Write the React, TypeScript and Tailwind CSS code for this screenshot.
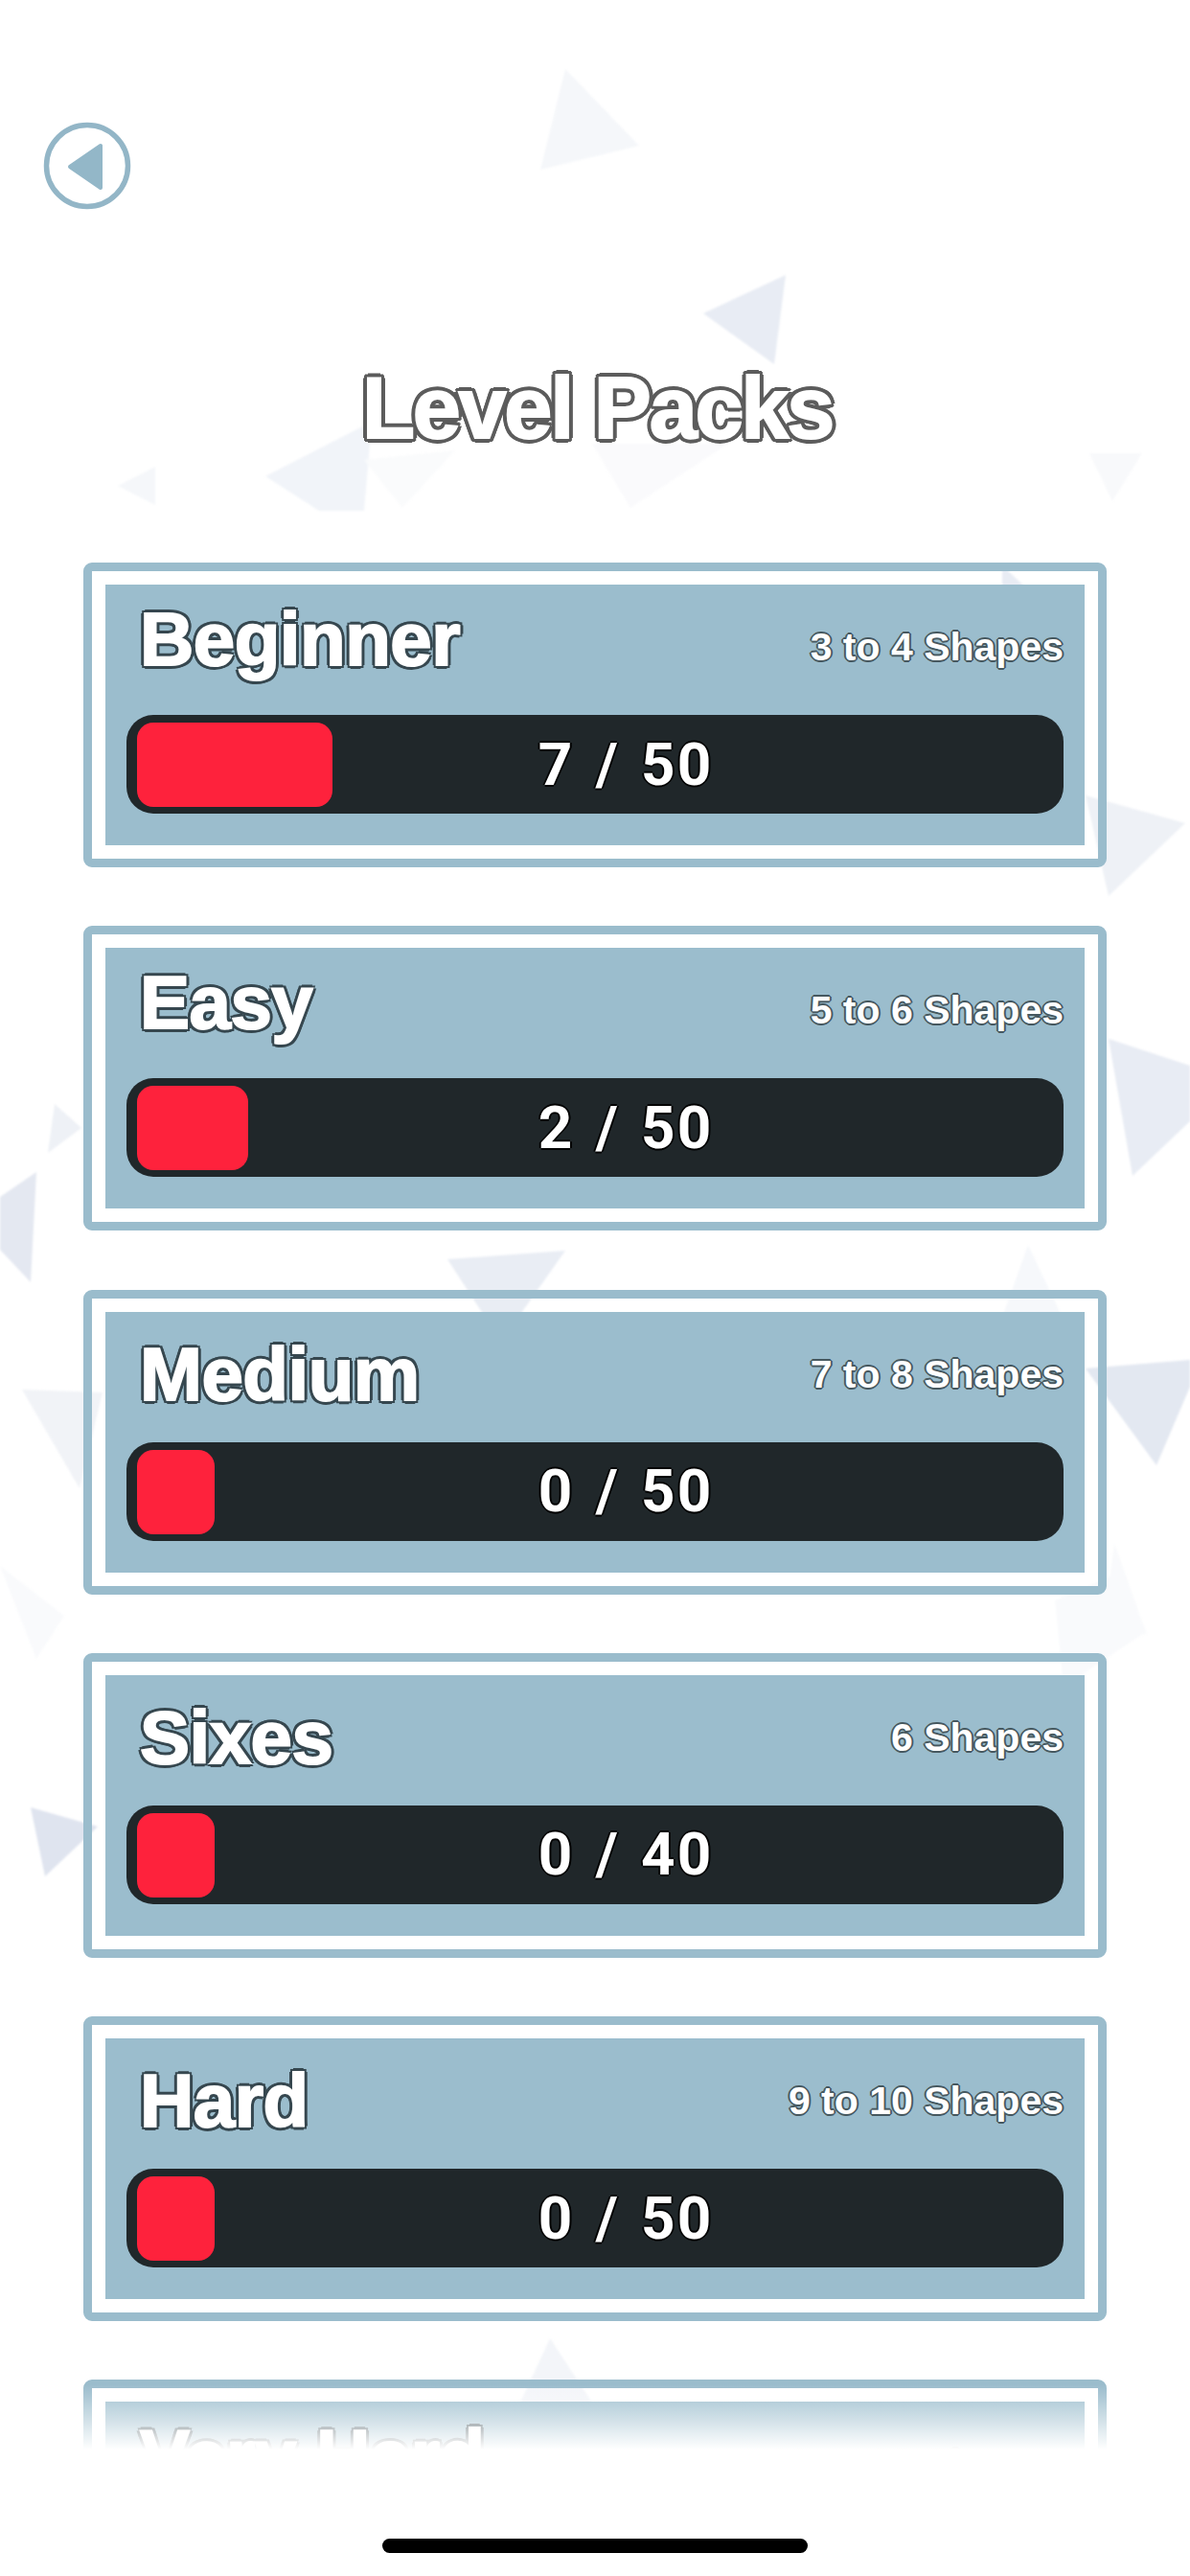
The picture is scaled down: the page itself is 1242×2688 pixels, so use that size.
import React from "react";

const titleFont = "font-['Liberation_Sans',Arial,sans-serif]";

const packs = [
  { name: "Beginner", shapes: "3 to 4 Shapes", score: "7 / 50", fill: 204, low: false },
  { name: "Easy", shapes: "5 to 6 Shapes", score: "2 / 50", fill: 116, low: false },
  { name: "Medium", shapes: "7 to 8 Shapes", score: "0 / 50", fill: 81, low: true },
  { name: "Sixes", shapes: "6 Shapes", score: "0 / 40", fill: 81, low: true },
  { name: "Hard", shapes: "9 to 10 Shapes", score: "0 / 50", fill: 81, low: true },
  { name: "Very Hard", shapes: "11 to 12 Shapes", score: "", fill: 81, low: false },
];

const triangles: [string, string][] = [
  ["590,72 667,152 564,177", "#f5f7fa"],
  ["820,287 734,327 808,380", "#e8ecf4"],
  ["388,440 277,497 333,533 380,533", "#f1f4f9"],
  ["162,487 123,507 162,527", "#f5f7fa"],
  ["475,470 420,530 380,480", "#fafbfc"],
  ["618,463 658,530 760,463", "#fafafc"],
  ["1137,473 1192,473 1161,523", "#f8f9fb"],
  ["1046,590 1110,650 1046,650", "#e8ecf4"],
  ["1133,830 1237,859 1157,935", "#eef1f6"],
  ["1157,1084 1242,1112 1242,1170 1182,1227", "#e8ecf4"],
  ["1133,1428 1242,1419 1242,1447 1207,1529", "#e3e8f1"],
  ["1163,1610 1197,1706 1153,1687", "#f9fafc"],
  ["57,1152 85,1177 50,1203", "#eef1f6"],
  ["38,1223 32,1338 0,1304 0,1249", "#e4e8f1"],
  ["23,1450 107,1453 83,1553", "#f1f3f7"],
  ["467,1314 590,1305 523,1400", "#e9edf4"],
  ["32,1886 102,1906 47,1958", "#dfe4ef"],
  ["0,1634 67,1686 38,1731", "#f9fafc"],
  ["1073,1299 1130,1420 1030,1420", "#f6f8fb"],
  ["1101,1670 1170,1640 1196,1703 1110,1760", "#f9fafc"],
  ["574,2440 543,2507 618,2507", "#f3f5f9"],
];

function Background() {
  return (
    <svg className="absolute inset-0 blur-[1px]" width="1242" height="2688" viewBox="0 0 1242 2688">
      {triangles.map(([points, fill], i) => (
        <polygon key={i} points={points} fill={fill} />
      ))}
    </svg>
  );
}

function BackButton() {
  return (
    <svg width="92" height="92" viewBox="0 0 92 92">
      <circle cx="46" cy="46" r="42.5" fill="none" stroke="#93b6c7" strokeWidth="5.5" />
      <path
        d="M28 47 L60 25 L60 69 Z"
        fill="#93b7c8"
        stroke="#93b7c8"
        strokeWidth="4"
        strokeLinejoin="round"
      />
    </svg>
  );
}

function PackCard({ name, shapes, score, fill, low }: (typeof packs)[number]) {
  return (
    <div className="h-[318px] shrink-0 rounded-[9px] border-[9px] border-[#9abccc] p-[14px]">
      <div className="h-full bg-[#9bbdcd] px-[22px]">
        <div className="flex h-[136px] items-start justify-between">
          <span
            className={`${titleFont} ${low ? "mt-[19px]" : "mt-[11px]"} ml-[14px] text-[78px] font-bold leading-[92px] tracking-[-0.5px] text-white [-webkit-text-stroke:2px_#fff] [text-shadow:4px_0_#36474f,3px_3px_#36474f,0_4px_#36474f,-3px_3px_#36474f,-4px_0_#36474f,-3px_-3px_#36474f,0_-4px_#36474f,3px_-3px_#36474f]`}
          >
            {name}
          </span>
          <span
            className={`${titleFont} mt-[39px] text-[41px] font-bold leading-[52px] text-white [text-shadow:2px_0_#46585f,1px_1px_#46585f,0_2px_#46585f,-1px_1px_#46585f,-2px_0_#46585f,-1px_-1px_#46585f,0_-2px_#46585f,1px_-1px_#46585f]`}
          >
            {shapes}
          </span>
        </div>
        <div className="relative flex h-[103px] items-center justify-center rounded-[28px] bg-[#20272a] pl-[64px]">
          <div
            className="absolute left-[11px] top-[8px] h-[88px] rounded-[17px] bg-[#fe223c]"
            style={{ width: fill }}
          />
          <span className="font-['Roboto',Arial,sans-serif] text-[62px] font-bold leading-none tracking-[2px] text-white [word-spacing:5px] [text-shadow:2px_0_#000,0_2px_#000,-2px_0_#000,0_-2px_#000]">
            {score}
          </span>
        </div>
      </div>
    </div>
  );
}

export default function App() {
  return (
    <div className="relative h-[2688px] w-[1242px] overflow-hidden bg-white">
      <Background />
      <div className="relative flex flex-col">
        <div className="ml-[45px] mt-[127px] h-[92px]">
          <BackButton />
        </div>
        <h1
          className={`${titleFont} mt-[152px] h-[110px] pl-[5px] text-center text-[90px] font-bold leading-[110px] tracking-[-2.2px] text-white [-webkit-text-stroke:2px_#fff] [text-shadow:5px_0_#5c5c5c,4px_3px_#5c5c5c,3px_4px_#5c5c5c,0_5px_#5c5c5c,-3px_4px_#5c5c5c,-4px_3px_#5c5c5c,-5px_0_#5c5c5c,-4px_-3px_#5c5c5c,-3px_-4px_#5c5c5c,0_-5px_#5c5c5c,3px_-4px_#5c5c5c,4px_-3px_#5c5c5c]`}
        >
          Level Packs
        </h1>
        <div className="mx-[87px] mt-[106px] flex flex-col gap-[61.25px]">
          {packs.map((p) => (
            <PackCard key={p.name} {...p} />
          ))}
        </div>
      </div>
      <div className="absolute bottom-0 left-0 right-0 flex h-[200px] flex-col">
        <div className="h-[68px] bg-gradient-to-b from-white/0 to-white" />
        <div className="flex-1 bg-white" />
      </div>
      <div className="absolute left-[399px] top-[2649px] h-[15px] w-[444px] rounded-full bg-black" />
    </div>
  );
}
